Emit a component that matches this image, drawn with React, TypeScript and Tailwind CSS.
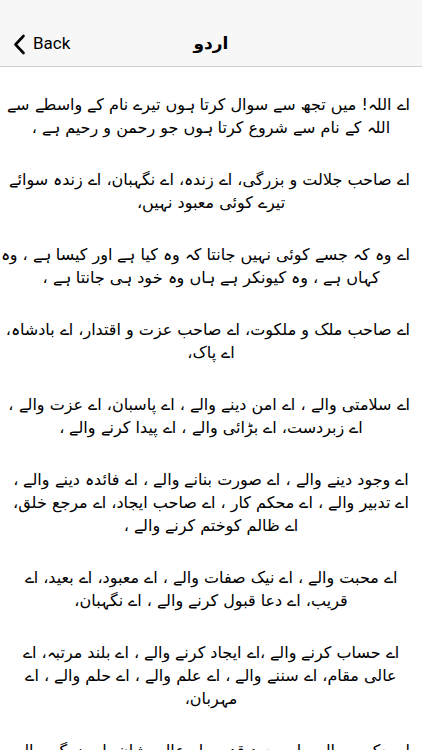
const paragraphs: string[][] = [
  [
    "اے اللہ! میں تجھ سے سوال کرتا ہوں تیرے نام کے واسطے سے",
    "اللہ کے نام سے شروع کرتا ہوں جو رحمن و رحیم ہے ،",
  ],
  [
    "اے صاحب جلالت و بزرگی، اے زندہ، اے نگہبان، اے زندہ سوائے",
    "تیرے کوئی معبود نہیں،",
  ],
  [
    "اے وہ کہ جسے کوئی نہیں جانتا کہ وہ کیا ہے اور کیسا ہے ، وہ",
    "کہاں ہے ، وہ کیونکر ہے ہاں وہ خود ہی جانتا ہے ،",
  ],
  ["اے صاحب ملک و ملکوت، اے صاحب عزت و اقتدار، اے بادشاہ،", "اے پاک،"],
  [
    "اے سلامتی والے ، اے امن دینے والے ، اے پاسبان، اے عزت والے ،",
    "اے زبردست، اے بڑائی والے ، اے پیدا کرنے والے ،",
  ],
  [
    "اے وجود دینے والے ، اے صورت بنانے والے ، اے فائدہ دینے والے ،",
    "اے تدبیر والے ، اے محکم کار ، اے صاحب ایجاد، اے مرجع خلق،",
    "اے ظالم کوختم کرنے والے ،",
  ],
  [
    "اے محبت والے ، اے نیک صفات والے ، اے معبود، اے بعید، اے",
    "قریب، اے دعا قبول کرنے والے ، اے نگہبان،",
  ],
  [
    "اے حساب کرنے والے ،اے ایجاد کرنے والے ، اے بلند مرتبہ، اے",
    "عالی مقام، اے سننے والے ، اے علم والے ، اے حلم والے ، اے",
    "مہربان،",
  ],
  [
    "اے حکمت والے ، اے وجود قدیم، اے عالی شان، اے بزرگی والے ،",
    "اے نور والے ، اے روشن کرنے والے ،",
  ],
];

function NavBar() {
  return (
    <header className="bg-[#f7f7f7] border-b border-[#cfcfcf] pt-[22px]">
      <div className="h-11 flex items-center relative">
        <button className="flex items-center gap-[7px] pl-[13px] text-black text-[17px]">
          <svg width="13" height="21" viewBox="0 0 13 21" fill="none">
            <path
              d="M10.5 2 L2.5 10.5 L10.5 19"
              stroke="#000"
              strokeWidth="2.6"
              strokeLinecap="round"
              strokeLinejoin="round"
            />
          </svg>
          <span style={{ fontFamily: "Roboto, 'Liberation Sans', sans-serif" }}>Back</span>
        </button>
        <h1
          className="absolute left-1/2 -translate-x-1/2 text-[17px] font-semibold text-black"
          style={{ fontFamily: "'DejaVu Sans', sans-serif" }}
        >
          اردو
        </h1>
      </div>
    </header>
  );
}

export default function App() {
  return (
    <div className="w-[422px] h-[750px] overflow-hidden bg-white">
      <NavBar />
      <main
        dir="rtl"
        className="px-3 pt-[26px] flex flex-col gap-[29px] text-center text-black text-[16px] leading-[23px]"
        style={{ fontFamily: "'DejaVu Sans', sans-serif" }}
      >
        {paragraphs.map((lines, i) => (
          <p key={i}>
            {lines.map((line, j) => (
              <span key={j} className="block whitespace-nowrap">
                {line}
              </span>
            ))}
          </p>
        ))}
      </main>
    </div>
  );
}
